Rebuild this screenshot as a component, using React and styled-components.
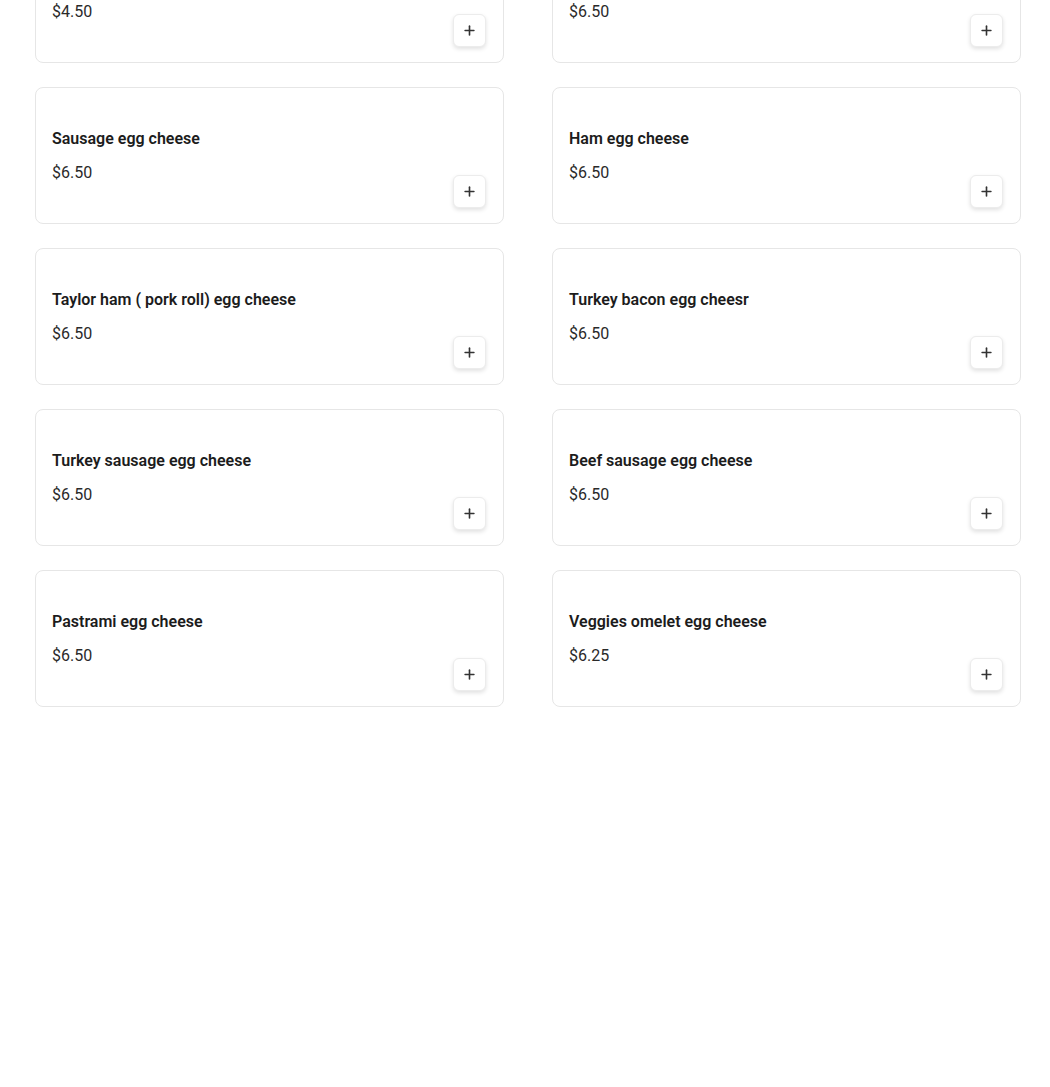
import React from "react";
import styled, { createGlobalStyle } from "styled-components";
import { Plus } from "lucide-react";

const Global = createGlobalStyle`
  html, body { margin: 0; padding: 0; background: #fff; }
  body { font-family: Roboto, "Liberation Sans", Arial, sans-serif; overflow: hidden; }
`;

const Page = styled.div`
  padding: 0 29px 0 35px;
  margin-top: -74px;
`;

const Grid = styled.div`
  display: grid;
  grid-template-columns: 469px 469px;
  column-gap: 48px;
  row-gap: 24px;
`;

const Card = styled.div`
  box-sizing: border-box;
  height: 137px;
  border: 1px solid #e6e6e6;
  border-radius: 8px;
  background: #fff;
  padding: 16px;
  display: flex;
  justify-content: space-between;
  align-items: flex-end;
`;

const Info = styled.div`
  align-self: flex-start;
  padding-top: 23px;
  display: flex;
  flex-direction: column;
  gap: 10px;
`;

const Title = styled.div`
  font-size: 16px;
  line-height: 24px;
  font-weight: 600;
  color: #1c1c1c;
`;

const Price = styled.div`
  font-size: 16px;
  line-height: 24px;
  font-weight: 400;
  color: #2a2a2a;
`;

const AddButton = styled.button`
  box-sizing: border-box;
  width: 33px;
  height: 33px;
  margin: 0 1px -1px 0;
  border: 1px solid #ececec;
  border-radius: 6px;
  background: #fff;
  box-shadow: 0 2px 4px rgba(0, 0, 0, 0.12);
  display: flex;
  align-items: center;
  justify-content: center;
  padding: 0;
  color: #333;
  cursor: pointer;
`;

const items = [
  { name: "Bacon egg cheese", price: "$4.50" },
  { name: "Pork roll egg cheese", price: "$6.50" },
  { name: "Sausage egg cheese", price: "$6.50" },
  { name: "Ham egg cheese", price: "$6.50" },
  { name: "Taylor ham ( pork roll) egg cheese", price: "$6.50" },
  { name: "Turkey bacon egg cheesr", price: "$6.50" },
  { name: "Turkey sausage egg cheese", price: "$6.50" },
  { name: "Beef sausage egg cheese", price: "$6.50" },
  { name: "Pastrami egg cheese", price: "$6.50" },
  { name: "Veggies omelet egg cheese", price: "$6.25" },
];

export default function App() {
  return (
    <>
      <Global />
      <Page>
        <Grid>
          {items.map((it) => (
            <Card key={it.name}>
              <Info>
                <Title>{it.name}</Title>
                <Price>{it.price}</Price>
              </Info>
              <AddButton aria-label="Add">
                <Plus size={15} strokeWidth={2.6} />
              </AddButton>
            </Card>
          ))}
        </Grid>
      </Page>
    </>
  );
}
